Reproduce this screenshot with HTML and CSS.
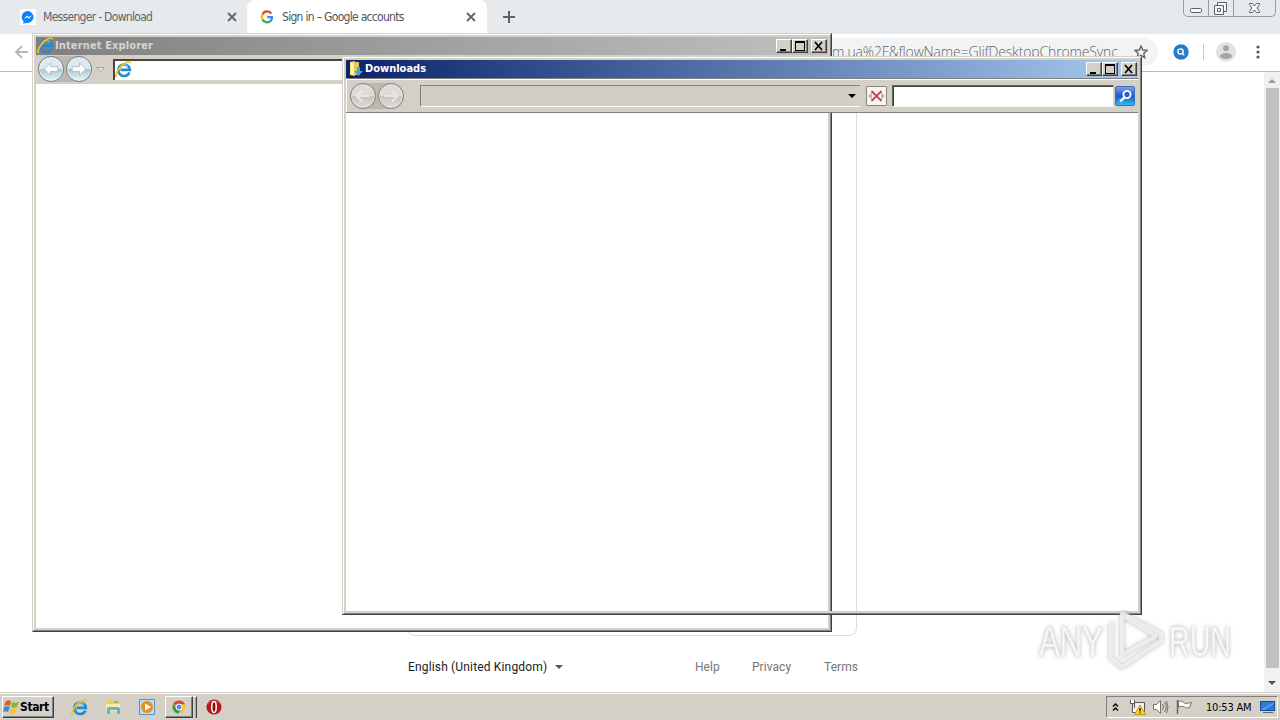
FILE: index.html
```html
<!DOCTYPE html>
<html lang="en">
<head>
  <meta charset="UTF-8">
  <title>Sign in – Google accounts</title>
  <link rel="stylesheet" href="styles.css">
</head>
<body>

  <svg class="defs" width="0" height="0">
    <symbol id="ie" viewBox="0 0 16 16">
      <path d="M13.6 10.8A5.4 5.4 0 1 1 14 8.4H5.2" fill="none" stroke="#258bd0" stroke-width="2.5"/>
      <path d="M4 7.2A4.8 4.8 0 0 1 12.2 5" fill="none" stroke="#78cdf4" stroke-width="1"/>
      <path d="M1.4 15.2C-.6 12 5 4.3 10.8 1.5c2-.9 3.7-.8 4 .7" fill="none" stroke="#e9c51d" stroke-width="1.6"/>
    </symbol>
    <symbol id="min" viewBox="0 0 16 14"><path d="M4 10h6v2H4z"/></symbol>
    <symbol id="max" viewBox="0 0 16 14"><path d="M3 2h10v10H3zM4 4v7h8V4z" fill-rule="evenodd"/></symbol>
    <symbol id="cls" viewBox="0 0 16 14"><path d="M4 3l7 8M11 3l-7 8" stroke="#000" stroke-width="1.7"/></symbol>
    <symbol id="arrow" viewBox="0 0 26 26"><path d="M5.500 13l7-6.500v4h8v5h-8v4z"/></symbol>
    <symbol id="thin" viewBox="0 0 26 26"><path d="M6 13h14M12 7l-6 6 6 6"/></symbol>
  </svg>

  <div class="browser">
    <div class="tabs">
      <div class="tab">
        <svg class="favicon" width="16" height="16" viewBox="0 0 16 16"><rect width="16" height="16" fill="#fff"/><path d="M8 2a6.3 6 0 0 0-4.5 10.200V15l2.300-1.200A6.300 6 0 1 0 8 2z" fill="#0a84ff"/><path d="M4 10l3-3.500L8.700 8 12 6.300 9 9.800 7.300 8.300z" fill="#fff"/></svg>
        <span class="t1">Messenger - Download</span>
        <svg class="x" width="10" height="10" viewBox="0 0 10 10"><path d="M1 1l8 8M9 1L1 9"/></svg>
      </div>
      <div class="tab active">
        <svg class="favicon" width="16" height="16" viewBox="0 0 16 16" fill="none" stroke-width="2.300"><path d="M12.400 4.500A5.200 5.200 0 0 0 3.500 5.400" stroke="#ea4335"/><path d="M3.500 5.400a5.200 5.200 0 0 0 0 5.200" stroke="#fbbc05"/><path d="M3.500 10.600a5.200 5.200 0 0 0 7.900 1.500" stroke="#34a853"/><path d="M11.400 12.100A5 5 0 0 0 13 8.200H8.200" stroke="#4285f4"/></svg>
        <span class="t2">Sign in – Google accounts</span>
        <svg class="x" width="10" height="10" viewBox="0 0 10 10"><path d="M1 1l8 8M9 1L1 9"/></svg>
      </div>
      <svg class="plus" width="12" height="12" viewBox="0 0 12 12"><path d="M6 0v12M0 6h12" stroke="#5f6368" stroke-width="2"/></svg>
      <div class="caption">
        <span class="c1"><svg width="24" height="17" viewBox="0 0 24 17"><rect x="6.500" y="8.500" width="11" height="4" rx="1"/></svg></span>
        <span class="c2"><svg width="24" height="17" viewBox="0 0 24 17"><path d="M8.500 5.500v-3h9v9h-3M5.500 5.500h9v9h-9zM8.500 8.500h3v3h-3z"/></svg></span>
        <span class="c3"><svg width="41" height="17" viewBox="0 0 41 17"><path d="M15.500 3.500h3l2 2.500 2-2.500h3v1L23 8l2.500 3.500v1h-3l-2-2.500-2 2.500h-3v-1L18 8l-2.500-3.500z"/></svg></span>
      </div>
    </div>
    <div class="toolbar">
      <svg class="back" width="15" height="14" viewBox="0 0 15 14"><path d="M14 7H2M8 1L2 7l6 6" fill="none" stroke="#b5b7b9" stroke-width="1.800"/></svg>
      <div class="address">
        <span>m.ua%2F&amp;flowName=GlifDesktopChromeSync</span>
        <svg width="14" height="14" viewBox="0 0 14 14"><path d="M7 1l1.700 4 4.300.4-3.200 2.900.9 4.400L7 10.400l-3.700 2.300.9-4.400L1 5.400 5.300 5z" fill="none" stroke="#5f6368" stroke-width="1.400"/></svg>
      </div>
      <svg class="lens" width="16" height="16" viewBox="0 0 16 16"><circle cx="8" cy="8" r="7.700" fill="#247bca"/><circle cx="7.500" cy="7.500" r="2.600" fill="none" stroke="#fff" stroke-width="1.400"/><path d="M9.200 9.200L11.300 11.300" stroke="#fff" stroke-width="1.500"/></svg>
      <i class="sep"></i>
      <svg class="avatar" width="20" height="20" viewBox="0 0 20 20"><circle cx="10" cy="10" r="10" fill="#e1e1e1"/><circle cx="10" cy="6.300" r="3" fill="#a6a6a6"/><ellipse cx="10" cy="14" rx="6" ry="3" fill="#a6a6a6"/></svg>
      <svg class="dots" width="4" height="14" viewBox="0 0 4 14" fill="#55585c"><circle cx="2" cy="2" r="1.600"/><circle cx="2" cy="7" r="1.600"/><circle cx="2" cy="12" r="1.600"/></svg>
    </div>
    <div class="page">
      <main>
        <div class="card"></div>
        <footer>
          <span class="lang">English (United Kingdom)</span>
          <i class="caret"></i>
          <span class="help">Help</span>
          <span class="privacy">Privacy</span>
          <span class="terms">Terms</span>
        </footer>
      </main>
      <div class="scroll">
        <i class="up"></i>
        <div class="thumb"></div>
        <i class="down"></i>
      </div>
    </div>
  </div>

  <div class="window explorer">
    <div class="title">
      <svg width="17" height="17"><use href="#ie"/></svg>
      <span>Internet Explorer</span>
      <div class="buttons">
        <b><svg><use href="#min"/></svg></b><b><svg><use href="#max"/></svg></b><b class="close"><svg><use href="#cls"/></svg></b>
      </div>
    </div>
    <div class="bar">
      <div class="nav">
        <b><svg width="24" height="24"><use href="#arrow"/></svg></b>
        <b><svg class="flip" width="24" height="24"><use href="#arrow"/></svg></b>
      </div>
      <svg class="drop" width="9" height="5" viewBox="0 0 9 5"><path d="M.5.500h8l-4 4z" fill="#e4e1da" stroke="#aaa59d"/></svg>
      <div class="url"><svg width="17" height="17"><use href="#ie"/></svg></div>
    </div>
    <div class="client"></div>
  </div>

  <div class="window downloads">
    <div class="title">
      <svg width="17" height="17" viewBox="0 0 17 17"><path d="M3 2l5-1v15l-5-1z" fill="#f8e27a"/><path d="M7 2h5v13H7z" fill="#eac65d"/><path d="M4 3l3 1v11l-3-1z" fill="#fff3a9"/><path d="M10 7h3v4h3l-4.500 5L7 11h3z" fill="#39a7ea"/></svg>
      <span>Downloads</span>
      <div class="buttons">
        <b><svg><use href="#min"/></svg></b><b><svg><use href="#max"/></svg></b><b class="close"><svg><use href="#cls"/></svg></b>
      </div>
    </div>
    <div class="bar">
      <div class="nav">
        <b><svg width="24" height="24"><use href="#thin"/></svg></b>
        <b><svg class="flip" width="24" height="24"><use href="#thin"/></svg></b>
      </div>
      <div class="path"><i></i></div>
      <div class="stop"><svg width="17" height="16" viewBox="0 0 17 16"><path d="M0 8l4-4v8zM17 8l-4-4v8z" fill="#bbb"/><path d="M3.500 3l10 10M13.500 3l-10 10" stroke="#c44a46" stroke-width="1.800"/></svg></div>
      <div class="search"></div>
      <div class="go"><svg width="19" height="19" viewBox="0 0 19 19"><path d="M9 10l-5 4.500" stroke="#e0f3ff" stroke-width="2.500"/><circle cx="11" cy="7.500" r="3.600" fill="#2d63c9" stroke="#fff" stroke-width="1.900"/></svg></div>
    </div>
    <div class="client"></div>
  </div>

  <svg class="watermark" width="204" height="66" viewBox="0 0 204 66">
    <g class="mark">
      <text x="5" y="48" textLength="64" lengthAdjust="spacingAndGlyphs">ANY</text>
      <text x="135" y="48" textLength="62" lengthAdjust="spacingAndGlyphs">RUN</text>
      <path d="M88 7v40l34-19z"/>
      <path d="M80 15l-3 2v33l11 9 39-26v-7L88 5"/>
    </g>
  </svg>

  <div class="taskbar">
    <div class="start">
      <svg width="17" height="16" viewBox="0 0 17 16"><path d="M3 2c2-1 3-1 5 0L7 7c-2-1-4-1-6 0z" fill="#e75c26"/><path d="M9 3c2 1 4 1 7 0l-2 5c-2 1-4 1-6 0z" fill="#80b936"/><path d="M1 8c2-1 4-1 6 0l-2 5c-2-1-3-1-5 0z" fill="#4384d3"/><path d="M8 9c2 1 4 1 6 0l-2 5c-2 1-4 1-6 0z" fill="#fbc32b"/></svg>
      <span>Start</span>
    </div>
    <svg class="q-ie" width="17" height="17"><use href="#ie"/></svg>
    <svg class="q-files" width="16" height="16" viewBox="0 0 16 16"><path d="M1 3l1-2h5l1 1h6v9H1z" fill="#e7ce69"/><path d="M1 5h14v7H1z" fill="#f8eaa0"/><path d="M2 15V9l2-1h9l2 1v6h-3v-4H5v4z" fill="#58b5df"/><path d="M9 3h4" stroke="#54a95b"/></svg>
    <svg class="q-media" width="16" height="16" viewBox="0 0 16 16"><path d="M.5.500h15v15H.5z" fill="#b9dff6" stroke="#5595c7"/><circle cx="8" cy="8" r="6" fill="#f18a18"/><path d="M6 4.500l6 3.500-6 3.500z" fill="#fff"/></svg>
    <div class="task">
      <svg width="14" height="14" viewBox="0 0 14 14"><circle cx="7" cy="7" r="6.500" fill="#f5c52c"/><path d="M7 7L1.300 3.700A6.500 6.500 0 0 1 12.900 4.300H7z" fill="#db4437"/><path d="M1.300 3.700A6.500 6.500 0 0 0 6.500 13.500L9.300 8.500 5 9z" fill="#2ca05a"/><circle cx="7" cy="7" r="3" fill="#4a8bef" stroke="#fff"/></svg>
    </div>
    <i class="stack"></i>
    <svg class="q-opera" width="16" height="16" viewBox="0 0 16 16"><circle cx="8" cy="8" r="7.600" fill="#b5181c"/><path d="M2 5a7 6 0 0 1 12 0" stroke="#d45350" fill="none"/><ellipse cx="8" cy="8" rx="2.200" ry="5.500" fill="#8a0c10" stroke="#fff" stroke-width="1.500"/></svg>
    <div class="tray">
      <svg class="chev" width="7" height="8" viewBox="0 0 7 8"><path d="M1 3.500L3.500 1 6 3.500M1 7.500L3.500 5 6 7.500" fill="none" stroke="#000" stroke-width="1.300"/></svg>
      <svg class="net" width="17" height="16" viewBox="0 0 17 16"><path d="M5.500 3.500h10v9h-10z" fill="#eee" stroke="#555"/><path d="M1.500 1v3.500h4V1M3.500 5v8.500h4" fill="#fff" stroke="#555"/><path d="M11 6l5.500 9.500h-11z" fill="#ffd52e" stroke="#c49b16"/><path d="M11 9v3.500M11 13.500v1" stroke="#000" stroke-width="1.200"/></svg>
      <svg class="vol" width="17" height="16" viewBox="0 0 17 16" fill="none" stroke="#77746f"><path d="M1.500 5.500h3l4-4v13l-4-4h-3z" fill="#fff"/><path d="M10.500 5q2 3 0 6M12.500 3q3.500 5 0 10M14.500 2q3 6 0 12"/></svg>
      <svg class="flag" width="17" height="16" viewBox="0 0 17 16"><path d="M1.500 1v14" stroke="#666" stroke-width="1.500"/><path d="M2.500 2.500c3-1 4 0 6 1.500 2 1 4 0 7-.500l-2 5c-3 1-4 0-5-.500-2-1-4-1-6 0z" fill="#fff" stroke="#77746f"/></svg>
      <span class="clock">10:53 AM</span>
      <svg class="desk" width="16" height="14" viewBox="0 0 16 14"><path d="M0 1h15v10H0z" fill="#174b98"/><path d="M1 2h13v8H1z" fill="#2e78d4"/><path d="M1 9L14 2v2L5 10H1z" fill="#4f99ec"/><path d="M3 12.500h10" stroke="#596579"/></svg>
    </div>
  </div>

</body>
</html>
```
FILE: styles.css
```css
* { box-sizing: border-box; }
body { margin: 0; width: 1280px; height: 720px; overflow: hidden; position: relative; background: #fff; font-family: "DejaVu Sans Condensed", "DejaVu Sans", sans-serif; font-size: 11px; }
svg { display: block; flex: none; }
.defs { position: absolute; }

/* browser */
.browser { height: 692px; display: flex; flex-direction: column; }
.tabs { height: 34px; background: #e7eaed; display: flex; flex: none; }
.tab { width: 247px; display: flex; align-items: center; padding-left: 20px; color: #5f6368; font-size: 12px; }
.tab.active { width: 240px; padding-left: 12px; background: #fff; border-radius: 8px 8px 0 0; color: #505357; }
.tab span { margin-left: 7px; white-space: nowrap; }
.t1 { width: 184px; letter-spacing: -0.69px; }
.t2 { width: 184px; letter-spacing: -0.7px; }
.x path { stroke: #5f6368; stroke-width: 1.8; }
.plus { margin: 11px 0 0 16px; }
.caption { margin-left: auto; margin-right: 4px; height: 17px; display: flex; border: 1px solid #999da1; border-top: 0; border-radius: 0 0 5px 5px; }
.caption span { height: 16px; width: 25px; border-left: 1px solid #999da1; overflow: hidden; }
.caption .c1 { border-left: 0; width: 24px; }
.caption .c3 { width: 42px; }
.caption svg { fill: #f7f8f9; stroke: #5d6267; }
.toolbar { height: 38px; flex: none; display: flex; align-items: center; background: #fff; border-bottom: 1px solid #b6b8ba; padding-bottom: 2px; }
.back { margin-left: 14px; }
.address { margin-left: 80px; width: 1049px; height: 28px; border-radius: 14px; background: #f1f3f4; display: flex; align-items: center; justify-content: flex-end; padding-right: 10px; font-family: "Open Sans", sans-serif; font-weight: 300; font-size: 14px; color: #60656a; }
.address span { width: 286px; white-space: nowrap; letter-spacing: -0.15px; margin-right: 16px; }
.lens { margin-left: 15px; }
.sep { width: 1px; height: 16px; background: #c5c8cb; margin: 0 13px 0 14px; }
.avatar { margin-left: -1px; }
.dots { margin-left: 20px; }
.page { flex: 1; display: flex; min-height: 0; }
main { flex: 1; }
.card { width: 450px; height: 564px; margin-left: 407px; border: 1px solid #dadce0; border-top: 0; border-radius: 0 0 8px 8px; }
footer { display: flex; align-items: center; height: 62px; padding-left: 408px; font: 12px Roboto, sans-serif; color: #757575; }
footer span { white-space: nowrap; letter-spacing: 0.05px; }
footer .lang { width: 147px; color: #202124; letter-spacing: 0.16px; }
.caret { border: 4px solid transparent; border-top-color: #555; border-bottom: 0; }
.help { width: 57px; margin-left: 132px; }
.privacy { width: 72px; }
.scroll { width: 16px; background: #f1f1f1; display: flex; flex-direction: column; align-items: center; }
.up { margin: 7px 0 5px; border: 4px solid transparent; border-bottom-color: #999; border-top: 0; }
.thumb { width: 13px; height: 580px; background: #c1c1c1; }
.down { margin-top: 13px; border: 4px solid transparent; border-top-color: #505050; border-bottom: 0; }

/* classic windows */
.window { position: absolute; width: 800px; border: 1px solid; border-color: #d4d0c8 #404040 #404040 #d4d0c8; display: flex; flex-direction: column; }
.window::before { content: ""; position: absolute; inset: 0; border: 1px solid; border-color: #fff #808080 #808080 #fff; box-shadow: inset 0 0 0 2px #d4d0c8; pointer-events: none; }
.explorer { left: 32px; top: 33px; height: 599px; background: #fff; }
.downloads { left: 342px; top: 56px; height: 559px; }
.title { height: 21px; border: 3px solid #d4d0c8; border-top-width: 2px; border-bottom: 0; display: flex; align-items: center; padding-left: 1px; font-family: "DejaVu Sans Condensed", sans-serif; font-weight: bold; font-size: 11px; background: linear-gradient(90deg, #808080, #c0c0c0) padding-box; color: #d8d5cf; flex: none; }
.title span { margin-left: 1px; white-space: nowrap; letter-spacing: 0.13px; }
.downloads .title { background: linear-gradient(90deg, #0a246a, #a6caf0) padding-box; color: #fff; }
.downloads .title span { letter-spacing: 0; }
.buttons { margin-left: auto; margin-right: 1px; display: flex; }
.buttons b { width: 16px; height: 14px; background: #d4d0c8; border: 1px solid; border-color: #fff #404040 #404040 #fff; box-shadow: inset -1px -1px #808080; }
.buttons b svg { width: 16px; height: 14px; margin: -1px; }
.buttons .close { margin-left: 3px; }
.bar { height: 29px; display: flex; flex: none; background: #d4d0c8; padding: 0 0 1px 5px; align-items: center; }
.nav { display: flex; gap: 2px; border-radius: 13px; background: #bbb8b1; }
.nav b { width: 26px; height: 26px; border: 1px solid #71848e; border-radius: 50%; box-shadow: inset 0 0 0 1px #edf5f8; background: linear-gradient(#e0e8ed 48%, #a8c4cf 50%, #e5f7fc); }
.nav svg { fill: #fff; stroke: #a9bcc5; }
.flip { transform: scaleX(-1); }
.drop { margin-left: 4px; }
.url { flex: 1; height: 21px; margin-left: 8px; background: #fff; border-top: 2px solid #484640; border-left: 2px solid #484640; }
.downloads .bar { height: 35px; padding: 0 0 0 4px; border: 1px solid #808080; border-width: 1px 0; margin: 0 3px; box-shadow: inset 1px 1px #fff; position: relative; }
.downloads .nav { gap: 2px; }
.downloads .nav b { border-color: #85827c; box-shadow: inset 0 0 0 1px #e8e5e0; background: linear-gradient(#dedbd6 48%, #c6c3be 50%, #e2dfdb); }
.downloads .nav svg { fill: none; stroke: #eae8e4; stroke-width: 2.4; }
.path { width: 440px; height: 22px; margin-left: 16px; border-top: 1px solid #808080; border-left: 1px solid #808080; border-bottom: 1px solid #fff; background: #d5cdc7; display: flex; align-items: center; justify-content: flex-end; padding-right: 4px; }
.path i { border: 4px solid transparent; border-top-color: #000; border-bottom: 0; }
.stop { width: 21px; height: 20px; margin-left: 6px; border: 1px solid #88857f; padding: 1px; background: #f7f5f3; border-radius: 1px; }
.search { width: 222px; height: 22px; margin-left: 5px; background: #fff; border: 1px solid; border-color: #66625d #d4d0c8 #fff #66625d; box-shadow: inset 1px 1px #404040; }
.go { width: 20px; height: 20px; margin-left: 1px; border: 1px solid #3470b8; border-radius: 2px; background: linear-gradient(#8998ec, #1f56c8 50%, #29bdf3); }
.client { flex: 1; }

.watermark { position: absolute; left: 1034px; top: 608px; overflow: visible; filter: drop-shadow(0 0 2px #aaa); }
.mark { opacity: .85; font: 43px "Liberation Sans", sans-serif; fill: #fff; stroke: #e7e7e7; stroke-width: .6; }
.mark path { fill: none; stroke: #f3f3f3; stroke-width: 4; }

/* taskbar */
.taskbar { position: relative; height: 28px; background: #d4d0c8; border-top: 1px solid #d4d0c8; box-shadow: inset 0 1px #fff; display: flex; align-items: center; padding-top: 1px; }
.start, .task { background: #d4d0c8; border: 1px solid; border-color: #fff #404040 #404040 #fff; box-shadow: inset -1px -1px #808080; display: flex; align-items: center; }
.start { width: 52px; height: 22px; margin-left: 2px; font-weight: bold; font-size: 12px; }
.start span { letter-spacing: -0.4px; }
.q-ie { margin-left: 17px; }
.q-files { margin-left: 17px; }
.q-media { margin-left: 18px; }
.task { width: 28px; height: 22px; margin-left: 10px; padding-left: 6px; }
.stack { width: 4px; height: 22px; border-right: 1px solid #404040; border-top: 1px solid #fff; box-shadow: inset -1px 0 #aaa; }
.q-opera { margin-left: 9px; }
.tray { margin-left: auto; margin-right: 2px; width: 172px; height: 22px; border: 1px solid; border-color: #808080 #fff #fff #808080; display: flex; align-items: center; padding-left: 5px; }
.net { margin-left: 10px; }
.vol { margin-left: 6px; }
.flag { margin-left: 7px; }
.clock { width: 47px; margin-left: 13px; white-space: nowrap; letter-spacing: -0.2px; }
.desk { margin-left: 7px; }
```
